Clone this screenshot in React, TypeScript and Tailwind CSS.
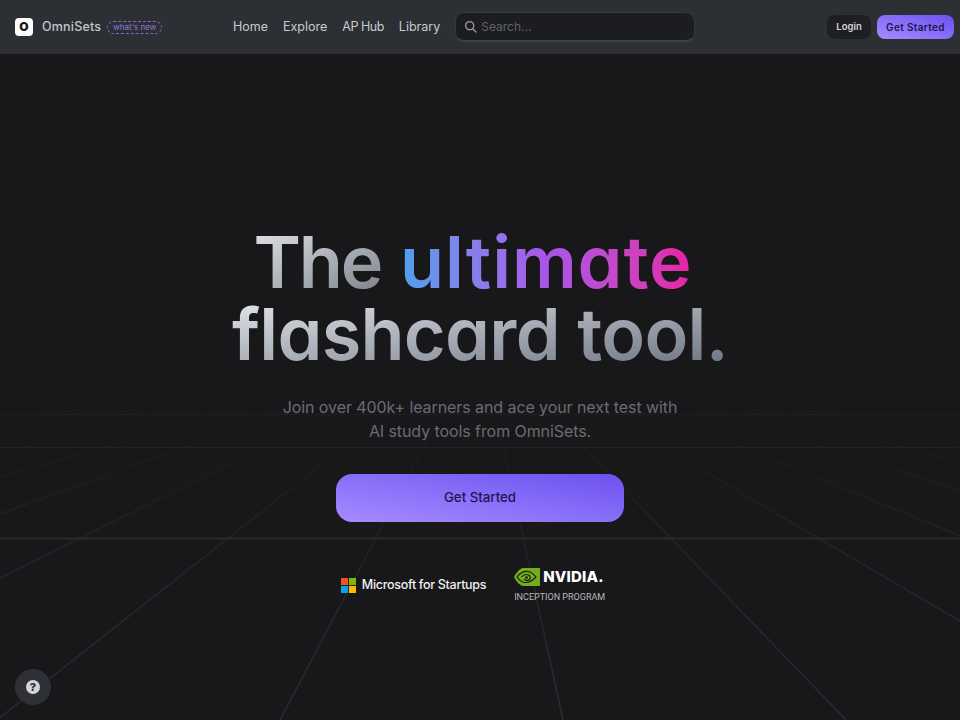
const font = "font-['Inter','Liberation_Sans',sans-serif]";

// perspective floor: all lines meet at (480, 340)
const floorStops = [-1701, -1418, -1135, -852, -569, -286, -3, 280, 563, 846, 1129, 1412, 1695, 1978, 2261];

function Grid() {
  return (
    <svg className="absolute inset-0 h-full w-full" viewBox="0 0 960 720" fill="none">
      <defs>
        <linearGradient id="floor" gradientUnits="userSpaceOnUse" x1="0" y1="380" x2="0" y2="720">
          <stop offset="0" stopColor="#2a2a2e" stopOpacity="0" />
          <stop offset="0.3" stopColor="#2a2a2e" stopOpacity="0.3" />
          <stop offset="0.55" stopColor="#2a2a2e" stopOpacity="0.7" />
          <stop offset="1" stopColor="#2c2c30" />
        </linearGradient>
      </defs>
      {floorStops.map((x) => (
        <line key={x} x1="480" y1="340" x2={x} y2="720" stroke="url(#floor)" strokeWidth="1.5" />
      ))}
      <line x1="0" y1="414.5" x2="960" y2="414.5" stroke="#202023" />
      <line x1="0" y1="447.5" x2="960" y2="447.5" stroke="#232326" />
      <line x1="0" y1="538.5" x2="960" y2="538.5" stroke="#2a2a2d" strokeWidth="2" />
    </svg>
  );
}

function NvidiaEye() {
  return (
    <svg width="26" height="18" viewBox="0 0 26 18" fill="none">
      <path d="M9 0H26V18H9C5 17 2 13 0 9 2 5 5 1 9 0Z" fill="#74ad1c" />
      <path d="M3 9C6 5 10 3 14 3.500 18 4 20 6.500 22 9 19 12 16 14.500 12 14.500 8 14.500 5 12 3 9Z" stroke="#18181b" strokeWidth="1.200" />
      <path d="M7.500 9C9.500 6.500 12 6 14.500 7 16.500 8 17 10 15.500 11.500 13.500 13 11 12.500 10 11" stroke="#18181b" strokeWidth="1.200" />
      <circle cx="12.500" cy="9.500" r="1.300" fill="#18181b" />
    </svg>
  );
}

function MicrosoftMark() {
  return (
    <svg width="15" height="15" viewBox="0 0 16 16">
      <rect width="7.500" height="7.500" fill="#f25022" />
      <rect x="8.500" width="7.500" height="7.500" fill="#7fba00" />
      <rect y="8.500" width="7.500" height="7.500" fill="#00a4ef" />
      <rect x="8.500" y="8.500" width="7.500" height="7.500" fill="#ffb900" />
    </svg>
  );
}

export default function App() {
  return (
    <div className={`relative h-[720px] w-[960px] overflow-hidden bg-[#18181b] ${font}`}>
      <Grid />

      <header className="relative flex h-[54px] items-center bg-[#2c2f34] pl-[15px] pr-[6px]">
        <div className="flex w-[218px] items-center">
          <div className="flex h-[18px] w-[18px] items-center justify-center rounded-[4px] bg-white text-[12px] font-black leading-none text-[#18181b]">
            O
          </div>
          <span className="ml-[9px] text-[12.500px] font-medium tracking-[0.2px] text-[#c4c6cc]">OmniSets</span>
          <span className="ml-[6px] rounded-full border border-dashed border-[#7f6bb8] px-[5px] text-[8px] leading-[11px] text-[#8f78d6]">
            what's new
          </span>
        </div>
        <nav className="flex items-center gap-[15px] text-[12.500px] text-[#c8cad0]">
          <span>Home</span>
          <span>Explore</span>
          <span className="tracking-[-0.5px]">AP Hub</span>
          <span>Library</span>
        </nav>
        <div className="ml-[15px] flex h-[30px] w-[240px] items-center gap-[4px] rounded-[9px] border border-[#35383d] border-b-2 border-b-[#3e4146] bg-[#1c1d20] pl-[8px]">
          <svg width="13" height="13" viewBox="0 0 24 24" fill="none" stroke="#9a9ca2" strokeWidth="2.500" strokeLinecap="round">
            <circle cx="10.500" cy="10.500" r="7.500" />
            <path d="M16 16l6 6" />
          </svg>
          <span className="text-[12px] text-[#606268]">Search...</span>
        </div>
        <div className="ml-auto flex items-center gap-[6px]">
          <button className="flex h-[24px] w-[44px] items-center justify-center rounded-[8px] bg-[#1e1f22] text-[9.500px] font-semibold text-[#d4d5d9]">
            Login
          </button>
          <button className="flex h-[24px] w-[77px] items-center justify-center rounded-[8px] bg-gradient-to-tr from-[#a68bff] to-[#6d4ff0] text-[10px] font-semibold tracking-[0.35px] text-[#1e1450]">
            Get Started
          </button>
        </div>
      </header>

      <main className="relative flex flex-col items-center pt-[172px]">
        <h1 className="text-center text-[72px] font-semibold leading-[72px] tracking-[-0.7px] [font-feature-settings:'cv11']">
          <span className="flex justify-center gap-[19px] pr-[14px]">
            <span className="inline-block bg-gradient-to-br from-[#e4e6ea] to-[#7b808a] bg-clip-text tracking-[-2.2px] text-transparent">The</span>
            <span className="inline-block bg-gradient-to-r from-[#4a9fee] via-[#a855e8] to-[#e520a5] bg-clip-text tracking-[0.9px] text-transparent">ultimate</span>
          </span>
          <span className="block bg-gradient-to-br from-[#e4e6ea] to-[#6b7280] bg-clip-text text-transparent">flashcard tool.</span>
        </h1>
        <p className="mt-[25px] text-center text-[16px] leading-[24px] tracking-[-0.08px] text-[#6b6c70]">
          Join over 400k+ learners and ace your next test with
          <br />
          AI study tools from OmniSets.
        </p>
        <button className="mt-[31px] flex h-[48px] w-[288px] items-center justify-center rounded-[16px] bg-gradient-to-tr from-[#a68bff] to-[#6d4ff0] text-[13.250px] font-medium text-[#1e1450]">
          Get Started
        </button>
        <div className="mt-[46px] flex items-center pr-[14px]">
          <div className="flex items-center gap-[6px]">
            <MicrosoftMark />
            <span className="text-[12.500px] font-medium tracking-[-0.3px] text-[#f0f0f2]">Microsoft for Startups</span>
          </div>
          <div className="ml-[28px] flex flex-col">
            <div className="flex items-center gap-[3px]">
              <NvidiaEye />
              <span className="text-[15px] font-extrabold leading-[18px] tracking-[0.2px] text-white">NVIDIA.</span>
            </div>
            <span className="mt-[6px] font-['Roboto',sans-serif] text-[9px] leading-[11px] text-[#b8b9bc]">INCEPTION PROGRAM</span>
          </div>
        </div>
      </main>

      <button className="absolute bottom-[15px] left-[15px] flex h-[36px] w-[36px] items-center justify-center rounded-full bg-[#2f3035]">
        <span className="flex h-[14px] w-[14px] items-center justify-center rounded-full bg-[#d4d5d8] text-[11px] font-extrabold leading-none text-[#2f3035]">
          ?
        </span>
      </button>
    </div>
  );
}
